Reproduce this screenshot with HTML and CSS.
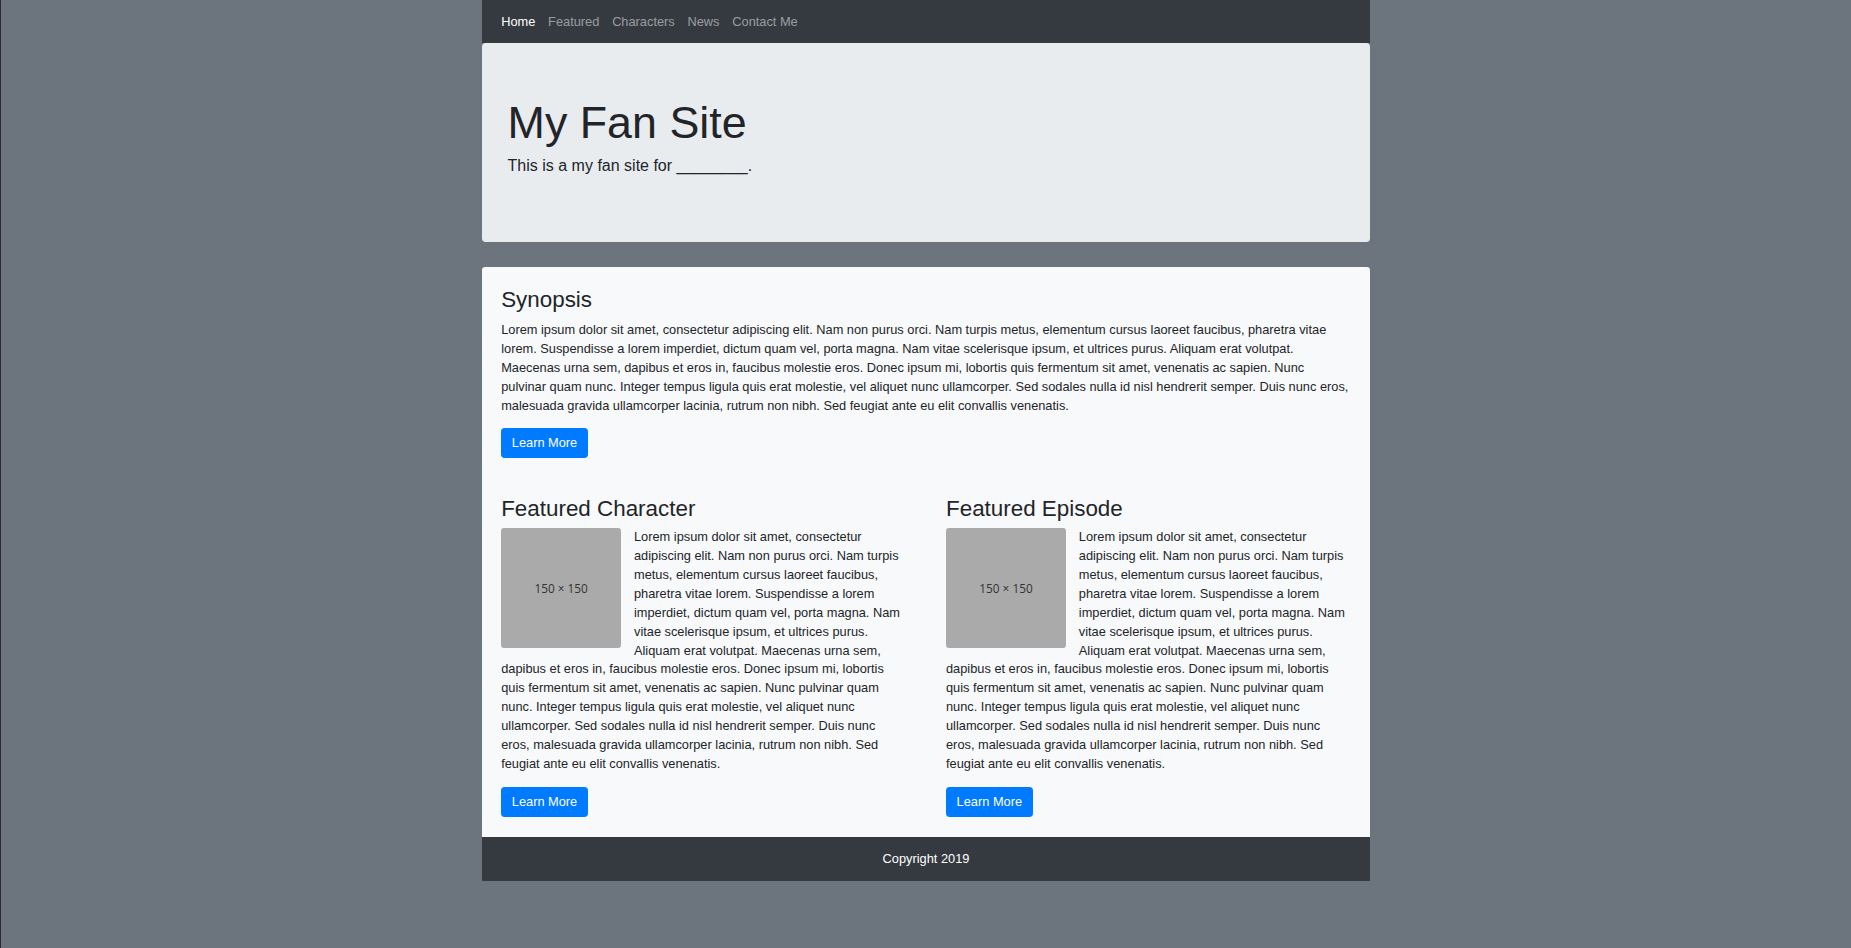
FILE: index.html
```html
<!DOCTYPE html>
<html lang="en">
<head>
  <meta charset="UTF-8" />
  <meta name="viewport" content="width=device-width, initial-scale=1.0"/>
  <title>My Fan Site</title>
  <link rel="stylesheet" href="styles.css">
</head>
<body>

  <div class="page">

    <nav class="navbar">
      <a class="nav-link active" href="#">Home</a>
      <a class="nav-link" href="#">Featured</a>
      <a class="nav-link" href="#">Characters</a>
      <a class="nav-link" href="#">News</a>
      <a class="nav-link" href="#">Contact Me</a>
    </nav>

    <header class="jumbotron">
      <h1>My Fan Site</h1>
      <p class="lead">This is a my fan site for ________.</p>
    </header>

    <main class="content">

      <section class="synopsis">
        <h3>Synopsis</h3>
        <p>Lorem ipsum dolor sit amet, consectetur adipiscing elit. Nam non purus orci. Nam turpis metus, elementum cursus laoreet faucibus, pharetra vitae lorem. Suspendisse a lorem imperdiet, dictum quam vel, porta magna. Nam vitae scelerisque ipsum, et ultrices purus. Aliquam erat volutpat. Maecenas urna sem, dapibus et eros in, faucibus molestie eros. Donec ipsum mi, lobortis quis fermentum sit amet, venenatis ac sapien. Nunc pulvinar quam nunc. Integer tempus ligula quis erat molestie, vel aliquet nunc ullamcorper. Sed sodales nulla id nisl hendrerit semper. Duis nunc eros, malesuada gravida ullamcorper lacinia, rutrum non nibh. Sed feugiat ante eu elit convallis venenatis.</p>
        <a class="btn" href="#">Learn More</a>
      </section>

      <div class="featured">
        <section class="feature">
          <h3>Featured Character</h3>
          <div class="thumb">150 × 150</div>
          <p>Lorem ipsum dolor sit amet, consectetur adipiscing elit. Nam non purus orci. Nam turpis metus, elementum cursus laoreet faucibus, pharetra vitae lorem. Suspendisse a lorem imperdiet, dictum quam vel, porta magna. Nam vitae scelerisque ipsum, et ultrices purus. Aliquam erat volutpat. Maecenas urna sem, dapibus et eros in, faucibus molestie eros. Donec ipsum mi, lobortis quis fermentum sit amet, venenatis ac sapien. Nunc pulvinar quam nunc. Integer tempus ligula quis erat molestie, vel aliquet nunc ullamcorper. Sed sodales nulla id nisl hendrerit semper. Duis nunc eros, malesuada gravida ullamcorper lacinia, rutrum non nibh. Sed feugiat ante eu elit convallis venenatis.</p>
          <a class="btn" href="#">Learn More</a>
        </section>

        <section class="feature">
          <h3>Featured Episode</h3>
          <div class="thumb">150 × 150</div>
          <p>Lorem ipsum dolor sit amet, consectetur adipiscing elit. Nam non purus orci. Nam turpis metus, elementum cursus laoreet faucibus, pharetra vitae lorem. Suspendisse a lorem imperdiet, dictum quam vel, porta magna. Nam vitae scelerisque ipsum, et ultrices purus. Aliquam erat volutpat. Maecenas urna sem, dapibus et eros in, faucibus molestie eros. Donec ipsum mi, lobortis quis fermentum sit amet, venenatis ac sapien. Nunc pulvinar quam nunc. Integer tempus ligula quis erat molestie, vel aliquet nunc ullamcorper. Sed sodales nulla id nisl hendrerit semper. Duis nunc eros, malesuada gravida ullamcorper lacinia, rutrum non nibh. Sed feugiat ante eu elit convallis venenatis.</p>
          <a class="btn" href="#">Learn More</a>
        </section>
      </div>

    </main>

    <footer>Copyright 2019</footer>

  </div>

</body>
</html>
```

FILE: styles.css
```css
html {
  font-size: 12.8px;
  background: #6c757d;
}

body {
  margin: 0;
  min-height: 100vh;
  border-left: 1px solid #2e2a31;
  font-family: "Liberation Sans", Arial, sans-serif;
  font-size: 1rem;
  line-height: 19px;
  color: #212529;
  background: #6c757d;
}

.page {
  width: 888px;
  margin: 0 auto;
}

/* Navbar */
.navbar {
  display: flex;
  padding: 0 12.8px;
  background: #343a40;
}

.nav-link {
  padding: 12px 6.4px;
  color: rgba(255, 255, 255, 0.5);
  text-decoration: none;
}

.nav-link.active {
  color: #fff;
}

/* Jumbotron */
.jumbotron {
  background: #e9ecef;
  padding: 53px 25.6px 50.5px;
  margin-bottom: 25.6px;
  border-radius: 3.8px;
}

.jumbotron h1 {
  margin: 0 0 4.5px;
  font-size: 44.8px;
  font-weight: 300;
  line-height: 1.2;
}

.jumbotron .lead {
  margin: 0 0 13px;
  font-size: 16px;
  line-height: 24px;
}

/* Content */
.content {
  background: #f8f9fa;
  padding: 19.2px;
  border-radius: 3.2px 3.2px 0 0;
}

.content h3 {
  margin: 0 0 6.4px;
  font-size: 22.4px;
  font-weight: 500;
  line-height: 1.2;
}

.content p {
  margin: 0 0 12.8px;
}

.synopsis {
  margin-bottom: 38px;
}

.featured {
  display: grid;
  grid-template-columns: 1fr 1fr;
  gap: 40px;
}

.feature h3 {
  margin-bottom: 4.8px;
}

.feature p {
  line-height: 18.9px;
}

.thumb {
  float: left;
  width: 120px;
  height: 120px;
  margin-right: 12.8px;
  display: flex;
  align-items: center;
  justify-content: center;
  background: #aaaaaa;
  color: #333;
  border-radius: 3px;
  font-family: "Open Sans", "DejaVu Sans", sans-serif;
  font-size: 11.8px;
}

.btn {
  display: inline-block;
  padding: 4.8px 9.6px;
  border: 1px solid #007bff;
  border-radius: 3.2px;
  background: #007bff;
  color: #fff;
  font-size: 1rem;
  line-height: 19.2px;
  text-decoration: none;
}

/* Footer */
footer {
  background: #343a40;
  color: #fff;
  text-align: center;
  padding: 12.8px 0;
  line-height: 19.2px;
}
```
